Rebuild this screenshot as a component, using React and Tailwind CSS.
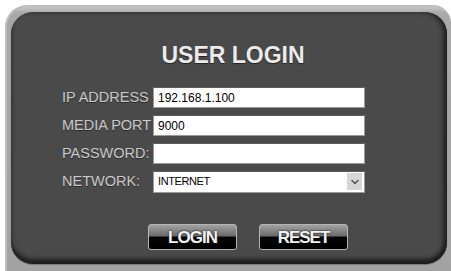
import { ChevronDown } from 'lucide-react';

const rows = [
  { label: 'IP ADDRESS', value: '192.168.1.100' },
  { label: 'MEDIA PORT', value: '9000' },
  { label: 'PASSWORD:', value: '' },
];

function Field({ label, children }) {
  return (
    <div className="flex items-center h-[21px]">
      <div className="w-[91px] text-[14.5px] leading-none text-[#c9c9c9] whitespace-nowrap overflow-hidden [text-shadow:0_1px_0_#2a2a2a]">
        {label}
      </div>
      {children}
    </div>
  );
}

function Button({ children }) {
  return (
    <button className="w-[89px] h-[26px] rounded-[3px] border border-[#b4b4b4] bg-[linear-gradient(to_bottom,#a2a2a2_0%,#6a6a6a_46%,#050505_50%,#000_100%)] text-[#f2f2f2] font-bold text-[17px] leading-none tracking-[-1px] pt-[1px] [text-shadow:0_0_2px_#000]">
      {children}
    </button>
  );
}

export default function App() {
  return (
    <div className="w-[451px] h-[271px] bg-white pt-[5px] pl-[5px] flex font-['Liberation_Sans',Arial,sans-serif]">
      <div className="flex-1 flex rounded-tl-[22px] rounded-tr-[18px] bg-[linear-gradient(to_bottom,#c6c6c6_0px,#a9a9a9_6px,#a2a2a2_100%)] border-l-2 border-t-2 border-[#bdbdbd] pl-[4px] pt-[5px] pr-[4px] pb-[7px]">
        <div className="flex-1 flex flex-col rounded-[22px] bg-[#4a4a4a] shadow-[inset_0_-5px_4px_#1e1e1e,inset_-4px_0_4px_#262626,0_1px_1px_#777] pt-[30px]">
          <h1 className="text-center text-[23px] leading-[26px] font-bold text-[#ebebeb] pl-[8px] [text-shadow:0_1px_1px_#222]">
            USER LOGIN
          </h1>

          <div className="flex flex-col gap-[7px] pl-[51px] mt-[19px]">
            {rows.map((r) => (
              <Field key={r.label} label={r.label}>
                <div className="w-[212px] h-[21px] bg-white border border-[#9a9a9a] border-t-[#5c5c5c] flex items-center pl-[4px] text-[12px] text-black">
                  {r.value}
                </div>
              </Field>
            ))}
            <Field label="NETWORK:">
              <div className="w-[212px] h-[22px] bg-white border border-[#9a9a9a] border-t-[#5c5c5c] flex items-center justify-between pl-[4px] pr-[2px] text-[11px] text-black">
                <span className="tracking-[-0.4px]">INTERNET</span>
                <span className="w-[15px] h-[17px] bg-[#d6d6d6] flex items-center justify-center">
                  <ChevronDown size={12} strokeWidth={3} className="text-[#555]" />
                </span>
              </div>
            </Field>
          </div>

          <div className="flex gap-[22px] pl-[137px] mt-[32px]">
            <Button>LOGIN</Button>
            <Button>RESET</Button>
          </div>
        </div>
      </div>
    </div>
  );
}
